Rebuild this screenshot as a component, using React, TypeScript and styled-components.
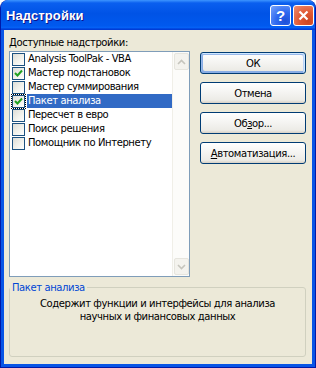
import styled, { createGlobalStyle, css } from 'styled-components';

const Global = createGlobalStyle`
  html, body {
    margin: 0;
    padding: 0;
    background: #ffffff;
  }
`;

const Window = styled.div`
  width: 316px;
  height: 368px;
  box-sizing: border-box;
  display: flex;
  flex-direction: column;
  background: #0855e6;
  border: 1px solid #0019a8;
  border-top: none;
  border-radius: 8px 8px 0 0;
  overflow: hidden;
`;

const TitleBar = styled.div`
  height: 30px;
  flex: none;
  display: flex;
  align-items: center;
  padding: 0 2px 0 6px;
  margin: 0 -1px;
  background: linear-gradient(
    180deg,
    #3d95ff 0%,
    #0a5fef 10%,
    #0053e6 45%,
    #0059ee 85%,
    #0461f5 92%,
    #003dd7 97%,
    #003dd7 100%
  );
  border-radius: 8px 8px 0 0;
`;

const Title = styled.span`
  flex: 1;
  color: #ffffff;
  font-family: 'Liberation Sans', Arial, sans-serif;
  font-weight: bold;
  font-size: 13px;
  letter-spacing: 0.1px;
  text-shadow: 1px 1px #0f1089;
`;

const CaptionButton = styled.div<{ $close?: boolean }>`
  width: 21px;
  height: 21px;
  box-sizing: border-box;
  margin-left: 2px;
  border: 1px solid #ffffff;
  border-radius: 3px;
  display: flex;
  align-items: center;
  justify-content: center;
  color: #ffffff;
  font-family: 'Liberation Sans', Arial, sans-serif;
  font-weight: bold;
  font-size: 15px;
  ${(p) =>
    p.$close
      ? css`
          background: radial-gradient(circle at 75% 80%, #cc4622 0%, #e15a35 45%, #ee8f73 100%);
        `
      : css`
          background: radial-gradient(circle at 75% 80%, #1d4fd8 0%, #2f6af0 45%, #79a5fb 100%);
        `}
`;

const Body = styled.div`
  flex: 1;
  background: #ece9d8;
  margin: 0 3px 3px;
  padding: 6px 6px 0 5px;
  display: flex;
  flex-direction: column;
  font-family: 'DejaVu Sans', sans-serif;
  font-size: 10px;
  letter-spacing: -0.4px;
  color: #000000;
`;

const Main = styled.div`
  display: grid;
  grid-template-columns: 181px 106px;
  grid-template-rows: 13px 226px;
  column-gap: 10px;
  row-gap: 2px;
`;

const FieldLabel = styled.div`
  line-height: 13px;
  grid-column: 1 / 3;
`;

const ListBox = styled.div`
  box-sizing: border-box;
  border: 1px solid #7f9db9;
  background: #ffffff;
  display: flex;
`;

const Rows = styled.div`
  flex: 1;
  display: flex;
  flex-direction: column;
`;

const Row = styled.div`
  height: 14px;
  display: flex;
  align-items: center;
`;

const Box = styled.div<{ $focus?: boolean }>`
  width: 13px;
  height: 13px;
  box-sizing: border-box;
  margin-left: 2px;
  border: 1px solid #1c5180;
  background: linear-gradient(135deg, #dcdcd7 0%, #f0f0ea 50%, #ffffff 100%);
  display: flex;
  align-items: center;
  justify-content: center;
  ${(p) =>
    p.$focus &&
    css`
      outline: 1px dotted #000000;
      outline-offset: 0;
    `}
`;

const ItemText = styled.span<{ $selected?: boolean }>`
  flex: 1;
  margin-left: 2px;
  padding-left: 1px;
  line-height: 14px;
  white-space: nowrap;
  ${(p) =>
    p.$selected &&
    css`
      background: #316ac5;
      color: #ffffff;
    `}
`;

const ScrollTrack = styled.div`
  width: 17px;
  flex: none;
  box-sizing: border-box;
  background: #fcfcfa;
  border-left: 1px solid #f0efe8;
  display: flex;
  flex-direction: column;
  justify-content: space-between;
  align-items: center;
  padding: 1px 0;
`;

const ScrollButton = styled.div`
  width: 15px;
  height: 17px;
  box-sizing: border-box;
  border: 1px solid #e6e5de;
  border-radius: 2px;
  background: #f4f3ee;
  display: flex;
  align-items: center;
  justify-content: center;
`;

const Buttons = styled.div`
  display: flex;
  flex-direction: column;
  gap: 8px;
  padding-top: 1px;
`;

const Button = styled.div<{ $default?: boolean }>`
  height: 22px;
  box-sizing: border-box;
  border: 1px solid #003c74;
  border-radius: 3px;
  background: linear-gradient(180deg, #ffffff, #ecebe6 86%, #d6d0c5);
  display: flex;
  align-items: center;
  justify-content: center;
  ${(p) =>
    p.$default &&
    css`
      box-shadow: inset -1px 1px #cee7ff, inset 1px 2px #98b8ea, inset -2px 2px #bcd4f6,
        inset 1px -1px #89ade4, inset 2px -2px #89ade4;
    `}
`;

const GroupBox = styled.fieldset`
  margin: 4px 0 0;
  padding: 3px 0 0;
  height: 76px;
  box-sizing: border-box;
  border: 1px solid #d0d0bf;
  border-radius: 3px;
  min-width: 0;
`;

const GroupTitle = styled.legend`
  padding: 0 2px 0 2px;
  margin-left: 0;
  line-height: 13px;
  color: #0046d5;
`;

const Description = styled.div`
  text-align: center;
  line-height: 13px;
`;

const Check = () => (
  <svg width="9" height="9" viewBox="0 0 9 9">
    <path d="M1 4 L3.5 6.5 L8 1.5" fill="none" stroke="#21a121" strokeWidth="2" />
  </svg>
);

const Chevron = ({ down }: { down?: boolean }) => (
  <svg width="9" height="6" viewBox="0 0 9 6">
    <path
      d={down ? 'M1 1 L4.5 4.5 L8 1' : 'M1 5 L4.5 1.5 L8 5'}
      fill="none"
      stroke="#c6c5bd"
      strokeWidth="1.6"
    />
  </svg>
);

const items = [
  { name: 'Analysis ToolPak - VBA', on: false },
  { name: 'Мастер подстановок', on: true },
  { name: 'Мастер суммирования', on: false },
  { name: 'Пакет анализа', on: true, selected: true },
  { name: 'Пересчет в евро', on: false },
  { name: 'Поиск решения', on: false },
  { name: 'Помощник по Интернету', on: false },
];

export default function App() {
  return (
    <>
      <Global />
      <Window>
        <TitleBar>
          <Title>Надстройки</Title>
          <CaptionButton>?</CaptionButton>
          <CaptionButton $close>
            <svg width="11" height="11" viewBox="0 0 11 11">
              <path d="M1.5 1.5 L9.5 9.5 M9.5 1.5 L1.5 9.5" stroke="#ffffff" strokeWidth="2.2" />
            </svg>
          </CaptionButton>
        </TitleBar>
        <Body>
          <Main>
            <FieldLabel>Доступные надстройки:</FieldLabel>
            <ListBox>
              <Rows>
                {items.map((it) => (
                  <Row key={it.name}>
                    <Box $focus={it.selected}>{it.on && <Check />}</Box>
                    <ItemText $selected={it.selected}>{it.name}</ItemText>
                  </Row>
                ))}
              </Rows>
              <ScrollTrack>
                <ScrollButton>
                  <Chevron />
                </ScrollButton>
                <ScrollButton>
                  <Chevron down />
                </ScrollButton>
              </ScrollTrack>
            </ListBox>
            <Buttons>
              <Button $default>ОК</Button>
              <Button>Отмена</Button>
              <Button>
                <span>
                  Об<u>з</u>ор...
                </span>
              </Button>
              <Button>
                <span>
                  <u>А</u>втоматизация...
                </span>
              </Button>
            </Buttons>
          </Main>
          <GroupBox>
            <GroupTitle>Пакет анализа</GroupTitle>
            <Description>
              Содержит функции и интерфейсы для анализа
              <br />
              научных и финансовых данных
            </Description>
          </GroupBox>
        </Body>
      </Window>
    </>
  );
}
